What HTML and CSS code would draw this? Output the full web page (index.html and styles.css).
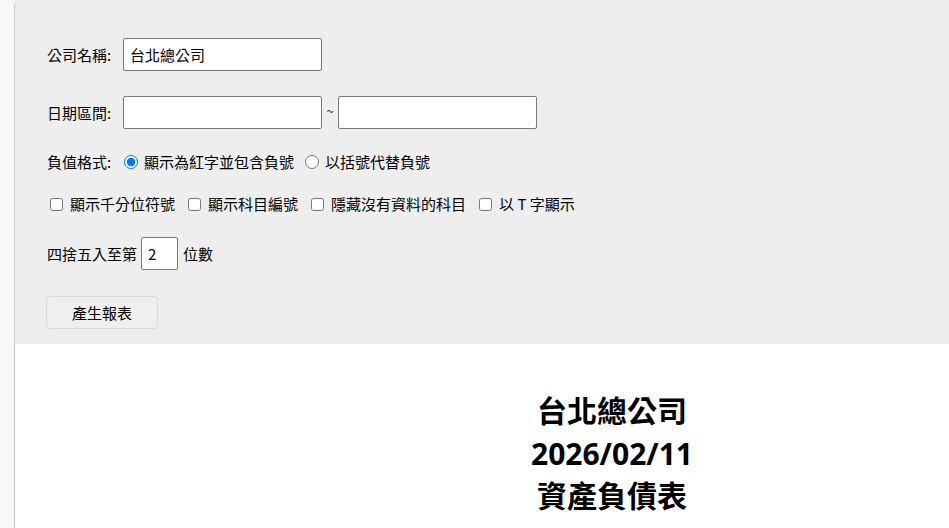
FILE: index.html
```html
<!DOCTYPE html>
<html lang="zh-Hant">
<head>
<meta charset="utf-8">
<title>資產負債表</title>
<link rel="stylesheet" href="styles.css">
</head>
<body>
<div class="frame">
  <form class="panel">
    <div class="row row-input">
      <label class="label" for="company">公司名稱:</label>
      <input class="text-input wide" id="company" type="text" value="台北總公司">
    </div>
    <div class="row row-input row-date">
      <label class="label" for="d1">日期區間:</label>
      <input class="text-input wide" id="d1" type="text">
      <span class="tilde">~</span>
      <input class="text-input wide" type="text">
    </div>
    <div class="row row-radio">
      <span class="label">負值格式:</span>
      <label class="opt"><input type="radio" name="neg" checked><span>顯示為紅字並包含負號</span></label>
      <label class="opt"><input type="radio" name="neg"><span>以括號代替負號</span></label>
    </div>
    <div class="row row-check">
      <label class="chk"><input type="checkbox"><span>顯示千分位符號</span></label>
      <label class="chk"><input type="checkbox"><span>顯示科目編號</span></label>
      <label class="chk"><input type="checkbox"><span>隱藏沒有資料的科目</span></label>
      <label class="chk"><input type="checkbox"><span>以 T 字顯示</span></label>
    </div>
    <div class="row row-round">
      <span>四捨五入至第</span>
      <input class="text-input narrow" type="text" value="2">
      <span>位數</span>
    </div>
    <div class="row row-button">
      <button class="btn" type="button">產生報表</button>
    </div>
  </form>
  <div class="report">
    <h1 class="title">台北總公司<br>2026/02/11<br>資產負債表</h1>
  </div>
</div>
</body>
</html>
```
FILE: styles.css
```css
html, body {
  margin: 0;
  padding: 0;
}
body {
  background: #f8f8f8;
  font-family: "Noto Sans CJK TC", "Noto Sans", sans-serif;
  font-size: 15px;
  color: #000;
  overflow: hidden;
}
.frame {
  margin-left: 14px;
  border-left: 1px solid #c9c9c9;
  border-top-left-radius: 6px;
  background: #ffffff;
  min-height: 528px;
}
.panel {
  background: #eeeeee;
  border-top-left-radius: 6px;
  padding: 38px 0 15px 32px;
  margin: 0;
  display: flex;
  flex-direction: column;
}
.row {
  display: flex;
  align-items: center;
  line-height: 20px;
}
.row-input { height: 33px; }
.row-date { margin-top: 25px; }
.row-radio { margin-top: 23px; height: 20px; }
.row-check { margin-top: 22px; height: 20px; }
.row-round { margin-top: 23px; height: 33px; }
.row-button { margin-top: 26px; }

.label {
  width: 76px;
  flex: none;
}
.text-input {
  box-sizing: border-box;
  height: 33px;
  border: 1px solid #7a7a7a;
  border-radius: 2px;
  background: #fff;
  padding: 0 6px;
  font: inherit;
  color: #000;
  margin: 0;
}
.wide { width: 199px; }
.narrow { width: 37px; margin: 0 5px 0 4px; }
.tilde {
  width: 16px;
  text-align: center;
  font-size: 13px;
  color: #333;
  margin-top: -4px;
}
.opt {
  display: flex;
  align-items: center;
  margin-right: 10px;
}
.opt input {
  margin: 0 6px 0 1px;
  width: 14px;
  height: 14px;
}
.chk {
  display: flex;
  align-items: center;
  margin-right: 10px;
}
.chk input {
  margin: 0 7px 0 3px;
  width: 13px;
  height: 13px;
}
.btn {
  box-sizing: border-box;
  width: 112px;
  height: 33px;
  margin-left: -1px;
  background: #efefef;
  border: 1px solid #d9d9d9;
  border-radius: 4px;
  font: inherit;
  color: #000;
  padding: 0;
}
.report {
  display: flex;
  justify-content: center;
  padding-left: 260px;
  padding-top: 46px;
}
.title {
  margin: 0;
  text-align: center;
  font-family: "Open Sans", "Noto Sans CJK TC", sans-serif;
  font-weight: 700;
  font-size: 30px;
  line-height: 42.5px;
  color: #000;
}
```
